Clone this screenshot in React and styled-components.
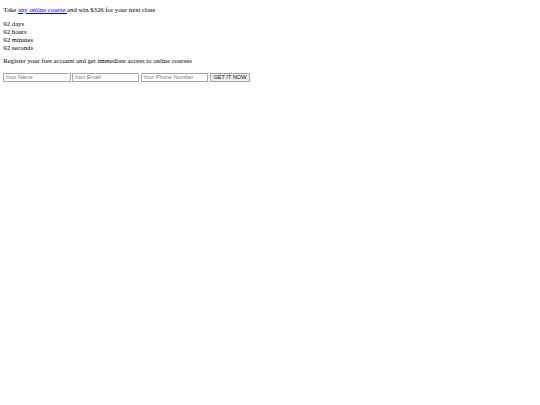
import React from "react";
import styled, { createGlobalStyle } from "styled-components";

const GlobalStyle = createGlobalStyle`
    body {
        margin: 0;
        background: #fff;
    }
`;

// the whole page is laid out at normal sizes and shrunk down
const Page = styled.div`
    zoom: 0.42;
    padding: 6px 8px 8px;
    font-family: "Liberation Serif", "Times New Roman", serif;
    font-size: 16px;
    color: #000;
`;

const Promo = styled.p`
    margin: 8px 0 18px;
`;

const CourseLink = styled.a`
    color: #0000ee;
    text-decoration: underline;
`;

const Countdown = styled.div`
    margin: 0;
`;

const Unit = styled.div`
    line-height: 18.4px;
`;

const Note = styled.p`
    margin: 13px 0 21px;
`;

const SignupForm = styled.form`
    display: flex;
    align-items: center;
    gap: 4px;
`;

const Field = styled.input`
    font-family: "Liberation Sans", Arial, sans-serif;
    font-size: 13.333px;
    width: 160px;
    padding: 1px 2px;
    border: 1px solid #a6a6a6;
    border-radius: 2px;
    height: 22px;
    box-sizing: border-box;

    &::placeholder {
        color: #808080;
    }
`;

const SubmitButton = styled.button`
    font-family: "Liberation Sans", Arial, sans-serif;
    font-size: 13.333px;
    padding: 1px 6px;
    height: 22px;
    border: 1px solid #a6a6a6;
    border-radius: 2px;
    background: #efefef;
    color: #111;
`;

const units = [
    { value: 92, label: "days" },
    { value: 92, label: "hours" },
    { value: 92, label: "minutes" },
    { value: 92, label: "seconds" },
];

function App() {
    return (
        <>
            <GlobalStyle />
            <Page>
                <Promo>
                    Take <CourseLink href="#">any online course </CourseLink>and win $326 for your next class
                </Promo>
                <Countdown>
                    {units.map((u) => (
                        <Unit key={u.label}>{u.value} {u.label}</Unit>
                    ))}
                </Countdown>
                <Note>Register your free account and get immediate access to online courses</Note>
                <SignupForm onSubmit={(e) => e.preventDefault()}>
                    <Field type="text" placeholder="Your Name" />
                    <Field type="email" placeholder="Your Email" />
                    <Field type="tel" placeholder="Your Phone Number" />
                    <SubmitButton type="submit">GET IT NOW</SubmitButton>
                </SignupForm>
            </Page>
        </>
    );
}

export default App;
